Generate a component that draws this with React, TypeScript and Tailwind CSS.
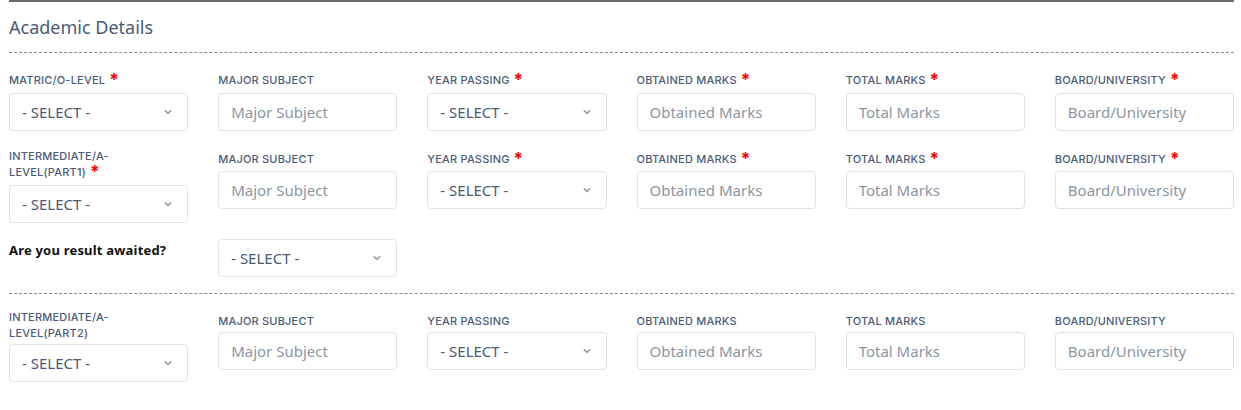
import React from "react";

type Field = {
  label: string[];
  required?: boolean;
  kind: "select" | "input";
  placeholder?: string;
};

function Chevron() {
  return (
    <svg width="10" height="10" viewBox="0 0 10 10" className="shrink-0">
      <path d="M2.3 3.8 L5 6.4 L7.7 3.8" fill="none" stroke="#98a1ae" strokeWidth="1.7" strokeLinecap="round" strokeLinejoin="round" />
    </svg>
  );
}

function Select() {
  return (
    <div className="flex h-[38px] items-center justify-between rounded-[4px] border border-[#dfe2e6] bg-white pl-[12px] pr-[14px] text-[15px] text-[#4b5a72]">
      <span>- SELECT -</span>
      <Chevron />
    </div>
  );
}

function TextInput({ placeholder }: { placeholder: string }) {
  return (
    <input
      readOnly
      placeholder={placeholder}
      className="block h-[38px] w-full rounded-[4px] border border-[#dfe2e6] bg-white px-[12px] text-[15px] text-[#4b5a72] outline-none placeholder:text-[#8c95a3]"
    />
  );
}

function Label({ lines, required, cls }: { lines: string[]; required?: boolean; cls: string }) {
  return (
    <div
      className={"text-[11px] font-medium uppercase leading-[16px] tracking-[0.2px] text-[#4b5b78] " + cls}
      style={{ fontFamily: "Inter, sans-serif" }}
    >
      {lines.map((l, i) => (
        <div key={i} className="h-[16px] overflow-visible whitespace-nowrap">
          {l}
          {required && i === lines.length - 1 && (
            <span className="ml-[4px] inline-block h-[16px] align-top text-[17px] font-bold leading-[17px] text-[#ff0000]">*</span>
          )}
        </div>
      ))}
    </div>
  );
}

function FieldCol({ f, cls }: { f: Field; cls: string }) {
  return (
    <div>
      <Label lines={f.label} required={f.required} cls={cls} />
      {f.kind === "select" ? <Select /> : <TextInput placeholder={f.placeholder || ""} />}
    </div>
  );
}

function Row({
  first,
  required,
  className,
  firstCls,
  restCls,
}: {
  first: Field;
  required: boolean;
  className: string;
  firstCls: string;
  restCls: string;
}) {
  const rest: Field[] = [
    { label: ["Major Subject"], kind: "input", placeholder: "Major Subject" },
    { label: ["Year Passing"], kind: "select", required },
    { label: ["Obtained Marks"], kind: "input", placeholder: "Obtained Marks", required },
    { label: ["Total Marks"], kind: "input", placeholder: "Total Marks", required },
    { label: ["Board/University"], kind: "input", placeholder: "Board/University", required },
  ];
  return (
    <div className={"grid grid-cols-6 gap-x-[30px] " + className}>
      <FieldCol f={first} cls={firstCls} />
      {rest.map((f, i) => (
        <FieldCol key={i} f={f} cls={restCls} />
      ))}
    </div>
  );
}

export default function App() {
  return (
    <div className="min-h-[410px] bg-white px-[9px] pr-[7px]" style={{ fontFamily: '"Noto Sans", Inter, sans-serif' }}>
      <div className="h-[2px] bg-[#6b6b6b]" />
      <h3 className="mt-[13px] text-[18px] font-normal leading-[24px] text-[#4b5a75]">Academic Details</h3>
      <div className="mt-[13px] border-t border-dashed border-[#8a8a8a]" />

      <Row
        className="mt-[19px]"
        required
        firstCls="mb-[5px]"
        restCls="mb-[5px]"
        first={{ label: ["Matric/O-Level"], kind: "select", required: true }}
      />
      <Row
        className="mt-[17px]"
        required
        firstCls="mb-[5px]"
        restCls="mt-[3px] mb-[4px]"
        first={{ label: ["Intermediate/A-", "Level(Part1)"], kind: "select", required: true }}
      />

      <div className="mt-[16px] grid grid-cols-6 gap-x-[30px]">
        <div className="pt-[3px] text-[13px] font-bold leading-[16px] tracking-[0.2px] text-[#111]">Are you result awaited?</div>
        <Select />
      </div>

      <div className="mt-[16px] border-t border-dashed border-[#8a8a8a]" />

      <Row
        className="mt-[15px]"
        required={false}
        firstCls="mb-[3px]"
        restCls="mt-[4px] mb-[3px]"
        first={{ label: ["Intermediate/A-", "Level(Part2)"], kind: "select" }}
      />
    </div>
  );
}
